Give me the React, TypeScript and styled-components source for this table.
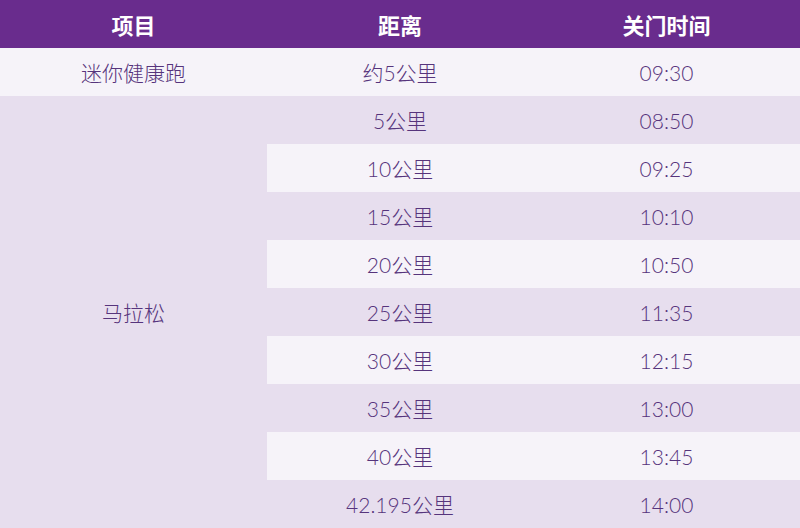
import React from "react";
import styled, { createGlobalStyle } from "styled-components";

const Global = createGlobalStyle`
  html, body { margin: 0; padding: 0; background: #f5f2f8; }
  body { font-family: "Lato", "Noto Sans CJK SC", "Noto Sans", sans-serif; }
`;

const Grid = styled.div`
  display: grid;
  grid-template-columns: 267px 266px 267px;
  grid-auto-rows: 48px;
  width: 800px;
`;

const Head = styled.div`
  background: #692c8d;
  color: #ffffff;
  font-family: "Noto Sans CJK SC", sans-serif;
  font-weight: 700;
  font-size: 22px;
  display: flex;
  align-items: center;
  justify-content: center;
`;

const Cell = styled.div<{ $dark?: boolean; $span?: number }>`
  background: ${(p) => (p.$dark ? "#e7deee" : "#f6f3f9")};
  color: #56347c;
  font-size: 21px;
  font-weight: 300;
  display: flex;
  align-items: center;
  justify-content: center;
  ${(p) => (p.$span ? `grid-row: span ${p.$span};` : "")}
`;

const rows: [string, string][] = [
  ["5公里", "08:50"],
  ["10公里", "09:25"],
  ["15公里", "10:10"],
  ["20公里", "10:50"],
  ["25公里", "11:35"],
  ["30公里", "12:15"],
  ["35公里", "13:00"],
  ["40公里", "13:45"],
  ["42.195公里", "14:00"],
];

export default function App() {
  return (
    <>
      <Global />
      <Grid>
        <Head>项目</Head>
        <Head>距离</Head>
        <Head>关门时间</Head>
        <Cell>迷你健康跑</Cell>
        <Cell>约5公里</Cell>
        <Cell>09:30</Cell>
        {rows.map(([d, t], i) => (
          <React.Fragment key={d}>
            {i === 0 && (
              <Cell $dark $span={rows.length}>
                马拉松
              </Cell>
            )}
            <Cell $dark={i % 2 === 0}>{d}</Cell>
            <Cell $dark={i % 2 === 0}>{t}</Cell>
          </React.Fragment>
        ))}
      </Grid>
    </>
  );
}
